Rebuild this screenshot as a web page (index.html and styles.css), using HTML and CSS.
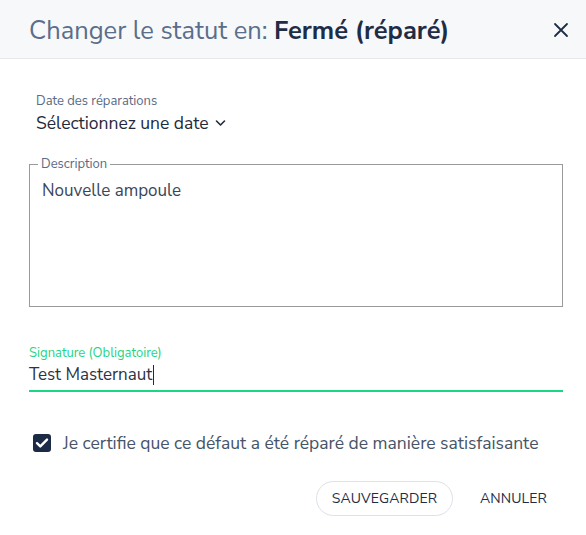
FILE: index.html
```html
<!DOCTYPE html>
<html lang="fr">
<head>
<meta charset="utf-8">
<link rel="stylesheet" href="styles.css">
</head>
<body>
<div class="dialog">
  <header class="header">
    <h1 class="title">Changer le statut en: <strong>Fermé (réparé)</strong></h1>
    <button class="close" aria-label="Fermer">
      <svg width="16" height="16" viewBox="0 0 16 16"><path d="M2 2L14 14M14 2L2 14" stroke="#1e2d45" stroke-width="1.8" stroke-linecap="round"/></svg>
    </button>
  </header>
  <div class="body">
    <div class="date">
      <div class="date-label">Date des réparations</div>
      <div class="date-value">Sélectionnez une date
        <svg width="11" height="8" viewBox="0 0 11 8"><path d="M1.5 2L5.5 6L9.5 2" fill="none" stroke="#1f2a3c" stroke-width="1.6" stroke-linecap="round" stroke-linejoin="round"/></svg>
      </div>
    </div>
    <fieldset class="desc">
      <legend>Description</legend>
      <div class="desc-text">Nouvelle ampoule</div>
    </fieldset>
    <div class="sig">
      <div class="sig-label">Signature (Obligatoire)</div>
      <div class="sig-input">Test Masternaut<span class="caret"></span></div>
    </div>
    <label class="check">
      <span class="box"><svg width="14" height="12" viewBox="0 0 14 12"><path d="M2 6.2L5.3 9.4L12 2.6" fill="none" stroke="#fff" stroke-width="2.4" stroke-linecap="round" stroke-linejoin="round"/></svg></span>
      <span>Je certifie que ce défaut a été réparé de manière satisfaisante</span>
    </label>
    <div class="actions">
      <button class="btn btn-outline">SAUVEGARDER</button>
      <button class="btn btn-text">ANNULER</button>
    </div>
  </div>
</div>
</body>
</html>
```
FILE: styles.css
```css
* { box-sizing: border-box; }
html, body { margin: 0; padding: 0; background: #fff; }
body { font-family: "Nunito Sans", Lato, "Open Sans", sans-serif; color: #1f2a3c; }
.dialog { width: 586px; height: 535px; }
.header {
  height: 59px;
  background: #f7f8fa;
  border-bottom: 1px solid #e6e8ec;
  display: flex;
  align-items: center;
  justify-content: space-between;
  padding: 2px 15px 0 29px;
}
.title { margin: 0; font-size: 25.5px; font-weight: 400; color: #5a6e8a; letter-spacing: 0; }
.title strong { font-weight: 700; color: #1e2d45; }
.close { background: none; border: 0; padding: 0; width: 20px; height: 20px; display: flex; align-items: center; justify-content: center; cursor: pointer; }
.body { padding: 33px 23px 0 29px; }
.date { padding-left: 7px; }
.date-label { font-size: 13px; color: #5b6b85; line-height: 18px; }
.date-value { font-size: 17.5px; line-height: 26px; color: #1f2a3c; display: flex; align-items: center; gap: 6px; }
.desc {
  margin: 21px 0 0 0;
  padding: 0 12px;
  border: 1px solid #9a9a9a;
  height: 150px;
  min-width: 0;
}
.desc legend { font-size: 13px; color: #5b6b85; padding: 0 3px; margin-left: -4px; line-height: 14px; }
.desc-text { font-size: 17px; color: #3a4658; margin-top: 8px; line-height: 24px; }
.sig { margin-top: 37px; }
.sig-label { font-size: 13px; color: #1ed487; line-height: 18px; }
.sig-input { font-size: 17px; color: #2a3446; line-height: 26px; padding-bottom: 2px; border-bottom: 2px solid #1ed487; display: flex; align-items: center; }
.caret { display: inline-block; width: 1px; height: 20px; background: #1f2a3c; margin-left: 1px; }
.check { display: flex; align-items: center; gap: 12px; margin-top: 39px; padding-left: 4px; font-size: 17.5px; color: #465468; }
.box { width: 18px; height: 18px; background: #1b2a45; border-radius: 3px; display: flex; align-items: center; justify-content: center; flex: none; }
.actions { display: flex; justify-content: flex-end; align-items: center; gap: 11px; margin-top: 26px; padding-right: 0; }
.btn { font-family: inherit; font-size: 14px; color: #1e2d45; background: none; cursor: pointer; letter-spacing: 0.1px; }
.btn-outline { border: 1px solid #dde1e8; border-radius: 18px; height: 35px; width: 137px; padding: 0; }
.btn-text { border: 0; height: 35px; padding: 0 16px; }
```
